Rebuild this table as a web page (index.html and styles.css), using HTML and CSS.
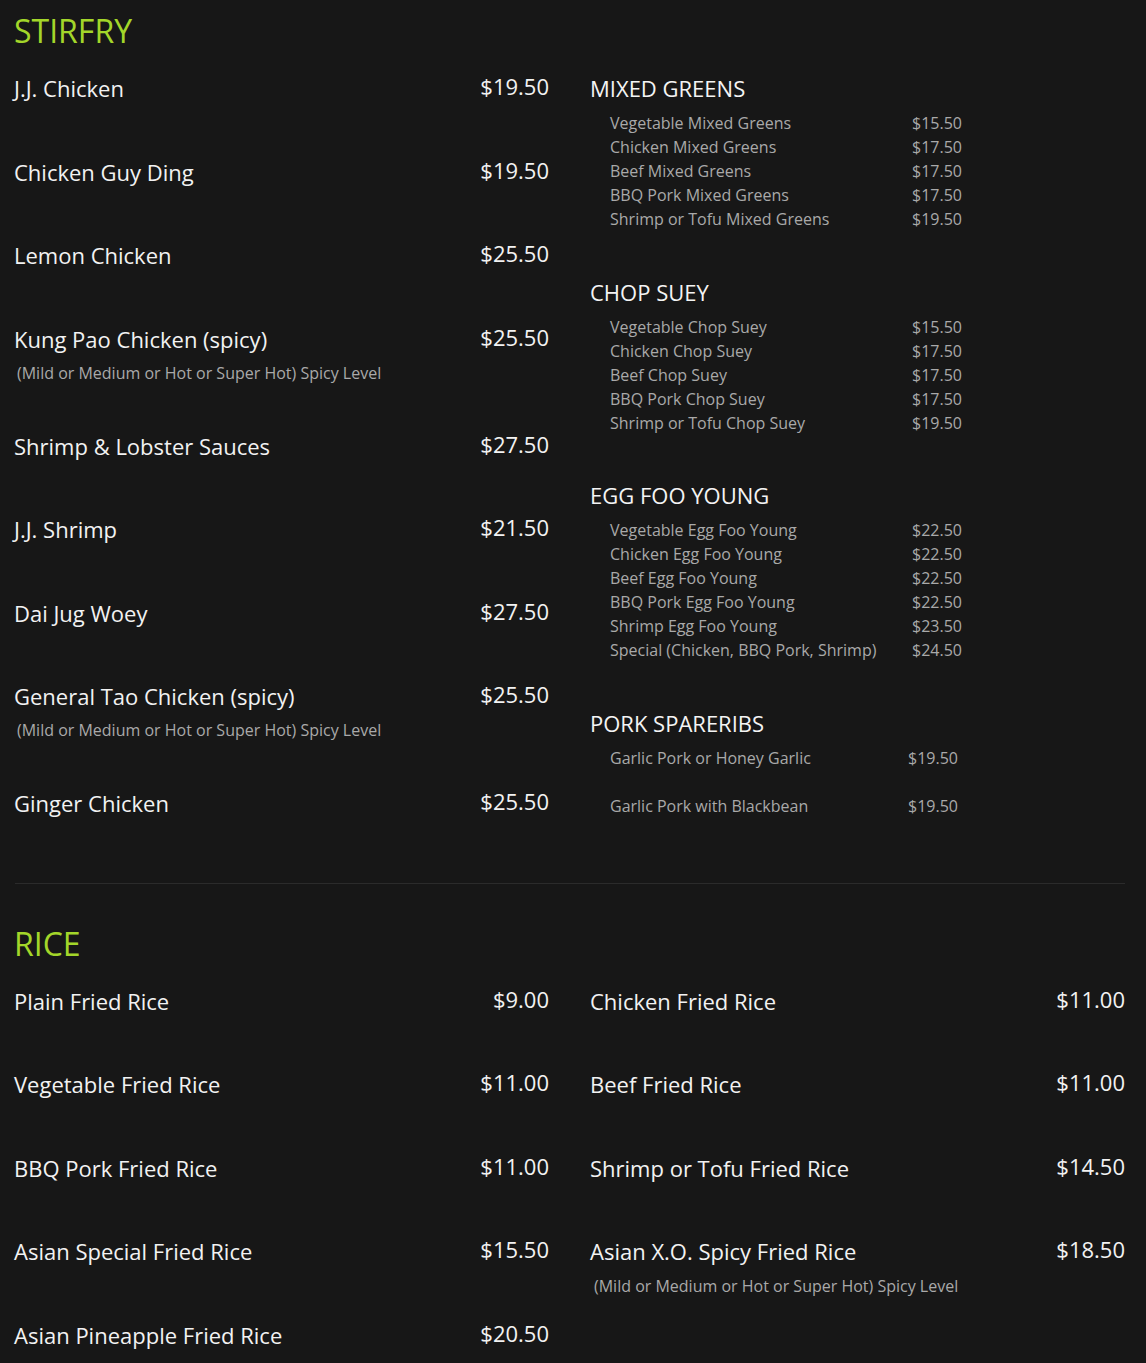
FILE: index.html
```html
<!DOCTYPE html>
<html lang="en">
<head>
<meta charset="utf-8">
<title>Menu</title>
<link rel="stylesheet" href="styles.css">
</head>
<body>
<main class="menu">
  <section class="section">
    <h2 class="section-title">STIRFRY</h2>
    <div class="columns">
      <div class="col">
        <div class="item"><div class="row"><span class="name">J.J. Chicken</span><span class="price">$19.50</span></div></div>
        <div class="item"><div class="row"><span class="name">Chicken Guy Ding</span><span class="price">$19.50</span></div></div>
        <div class="item"><div class="row"><span class="name">Lemon Chicken</span><span class="price">$25.50</span></div></div>
        <div class="item"><div class="row"><span class="name">Kung Pao Chicken (spicy)</span><span class="price">$25.50</span></div><p class="note">(Mild or Medium or Hot or Super Hot) Spicy Level</p></div>
        <div class="item"><div class="row"><span class="name">Shrimp &amp; Lobster Sauces</span><span class="price">$27.50</span></div></div>
        <div class="item"><div class="row"><span class="name">J.J. Shrimp</span><span class="price">$21.50</span></div></div>
        <div class="item"><div class="row"><span class="name">Dai Jug Woey</span><span class="price">$27.50</span></div></div>
        <div class="item"><div class="row"><span class="name">General Tao Chicken (spicy)</span><span class="price">$25.50</span></div><p class="note">(Mild or Medium or Hot or Super Hot) Spicy Level</p></div>
        <div class="item"><div class="row"><span class="name">Ginger Chicken</span><span class="price">$25.50</span></div></div>
      </div>
      <div class="col">
        <div class="group">
          <h3 class="group-title">MIXED GREENS</h3>
          <ul class="sublist">
            <li><span>Vegetable Mixed Greens</span><span>$15.50</span></li>
            <li><span>Chicken Mixed Greens</span><span>$17.50</span></li>
            <li><span>Beef Mixed Greens</span><span>$17.50</span></li>
            <li><span>BBQ Pork Mixed Greens</span><span>$17.50</span></li>
            <li><span>Shrimp or Tofu Mixed Greens</span><span>$19.50</span></li>
          </ul>
        </div>
        <div class="group">
          <h3 class="group-title">CHOP SUEY</h3>
          <ul class="sublist">
            <li><span>Vegetable Chop Suey</span><span>$15.50</span></li>
            <li><span>Chicken Chop Suey</span><span>$17.50</span></li>
            <li><span>Beef Chop Suey</span><span>$17.50</span></li>
            <li><span>BBQ Pork Chop Suey</span><span>$17.50</span></li>
            <li><span>Shrimp or Tofu Chop Suey</span><span>$19.50</span></li>
          </ul>
        </div>
        <div class="group">
          <h3 class="group-title">EGG FOO YOUNG</h3>
          <ul class="sublist">
            <li><span>Vegetable Egg Foo Young</span><span>$22.50</span></li>
            <li><span>Chicken Egg Foo Young</span><span>$22.50</span></li>
            <li><span>Beef Egg Foo Young</span><span>$22.50</span></li>
            <li><span>BBQ Pork Egg Foo Young</span><span>$22.50</span></li>
            <li><span>Shrimp Egg Foo Young</span><span>$23.50</span></li>
            <li><span>Special (Chicken, BBQ Pork, Shrimp)</span><span>$24.50</span></li>
          </ul>
        </div>
        <div class="group">
          <h3 class="group-title">PORK SPARERIBS</h3>
          <ul class="sublist narrow">
            <li><span>Garlic Pork or Honey Garlic</span><span>$19.50</span></li>
            <li class="blank"></li>
            <li><span>Garlic Pork with Blackbean</span><span>$19.50</span></li>
          </ul>
        </div>
      </div>
    </div>
  </section>

  <hr class="divider">

  <section class="section rice">
    <h2 class="section-title">RICE</h2>
    <div class="columns">
      <div class="col">
        <div class="item"><div class="row"><span class="name">Plain Fried Rice</span><span class="price">$9.00</span></div></div>
        <div class="item"><div class="row"><span class="name">Vegetable Fried Rice</span><span class="price">$11.00</span></div></div>
        <div class="item"><div class="row"><span class="name">BBQ Pork Fried Rice</span><span class="price">$11.00</span></div></div>
        <div class="item"><div class="row"><span class="name">Asian Special Fried Rice</span><span class="price">$15.50</span></div></div>
        <div class="item"><div class="row"><span class="name">Asian Pineapple Fried Rice</span><span class="price">$20.50</span></div></div>
      </div>
      <div class="col">
        <div class="item"><div class="row"><span class="name">Chicken Fried Rice</span><span class="price">$11.00</span></div></div>
        <div class="item"><div class="row"><span class="name">Beef Fried Rice</span><span class="price">$11.00</span></div></div>
        <div class="item"><div class="row"><span class="name">Shrimp or Tofu Fried Rice</span><span class="price">$14.50</span></div></div>
        <div class="item"><div class="row"><span class="name">Asian X.O. Spicy Fried Rice</span><span class="price">$18.50</span></div><p class="note wide">(Mild or Medium or Hot or Super Hot) Spicy Level</p></div>
      </div>
    </div>
  </section>
</main>
</body>
</html>
```

FILE: styles.css
```css
html, body {
  margin: 0;
  padding: 0;
  background: #171717;
}

body {
  font-family: "Open Sans", "Noto Sans", "Liberation Sans", sans-serif;
  color: #f2f2f2;
}

.menu {
  width: 1111px;
  padding: 11px 0 0 14px;
}

.section-title {
  margin: 0 0 22px;
  font-size: 32px;
  line-height: 40px;
  font-weight: 400;
  color: #a3d62a;
}

.columns {
  display: grid;
  grid-template-columns: 535px 535px;
  column-gap: 41px;
  align-items: start;
}

.item {
  margin-bottom: 53.5px;
}

.row {
  display: flex;
  justify-content: space-between;
  align-items: flex-start;
}

.name {
  font-size: 22px;
  line-height: 30px;
}

.price {
  font-size: 22px;
  line-height: 26px;
}

.note {
  margin: 7px 0 -7.5px;
  padding-left: 3px;
  font-size: 16px;
  line-height: 24px;
  color: #a9a9a9;
}

.note.wide {
  margin-top: 8px;
  padding-left: 4px;
}

.group {
  margin-bottom: 45.5px;
}

.group-title {
  margin: 0;
  font-size: 22px;
  line-height: 30px;
  font-weight: 400;
  color: #f4f4f4;
}

.sublist {
  list-style: none;
  margin: 8px 0 0;
  padding: 0 0 0 20px;
  width: 352px;
  font-size: 16px;
  line-height: 24px;
  color: #a9a9a9;
}

.sublist.narrow {
  width: 348px;
}

.sublist li {
  display: flex;
  justify-content: space-between;
}

.sublist li.blank {
  height: 24px;
}

.divider {
  margin: 11px 0 40px 1px;
  border: 0;
  height: 1px;
  background: #2b2b2b;
}
```
